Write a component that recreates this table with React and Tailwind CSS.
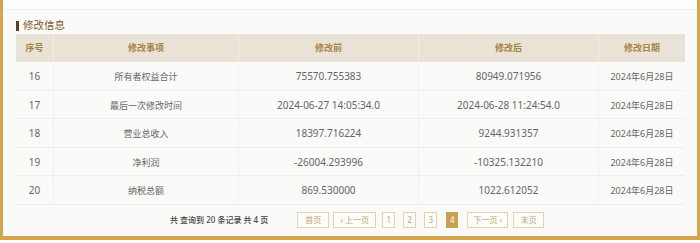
import React from "react";

const rows = [
  { id: 16, item: "所有者权益合计", before: "75570.755383", after: "80949.071956", date: "2024年6月28日" },
  { id: 17, item: "最后一次修改时间", before: "2024-06-27 14:05:34.0", after: "2024-06-28 11:24:54.0", date: "2024年6月28日" },
  { id: 18, item: "营业总收入", before: "18397.716224", after: "9244.931357", date: "2024年6月28日" },
  { id: 19, item: "净利润", before: "-26004.293996", after: "-10325.132210", date: "2024年6月28日" },
  { id: 20, item: "纳税总额", before: "869.530000", after: "1022.612052", date: "2024年6月28日" },
];

const cols = "grid grid-cols-[37px_185px_180px_180px_87px]";

const PageBtn = ({ children, active, className = "" }) => (
  <div
    className={
      "h-[16px] flex items-center justify-center text-[8px] leading-none border " +
      (active ? "bg-[#c9a055] border-[#c9a055] text-white" : "border-[#e3d3ae] text-[#bfa678] bg-[#fdfcf9]") +
      " " +
      className
    }
  >
    {children}
  </div>
);

const App = () => {
  return (
    <div
      className="w-[700px] h-[243px] bg-white overflow-hidden"
      style={{ fontFamily: '"Noto Sans", "Noto Sans CJK SC", sans-serif' }}
    >
      <div className="h-[240px] bg-[#fafaf9] border-l-[3px] border-r-[3px] border-b-4 border-[#d6a54b]">
        <div className="h-[10px] bg-[#fdfdfd] border-b border-[#efefef]" />

        <div className="flex items-center pl-[13px] pt-[7px] h-[24px]">
          <div className="w-[3px] h-[10px] bg-[#5e3b16] mr-[4px]" />
          <span className="text-[10.5px] leading-none text-[#7d5a2c]">修改信息</span>
        </div>

        <div className="ml-[13px] w-[669px]">
          <div className={cols + " h-[28px] bg-[#e9e3d7] text-[9px] font-bold text-[#a8823f]"}>
            <div className="flex items-center justify-center">序号</div>
            <div className="flex items-center justify-center border-l border-[#f1ece3]">修改事项</div>
            <div className="flex items-center justify-center border-l border-[#f1ece3]">修改前</div>
            <div className="flex items-center justify-center border-l border-[#f1ece3]">修改后</div>
            <div className="flex items-center justify-center border-l border-[#f1ece3]">修改日期</div>
          </div>
          {rows.map((r) => (
            <div key={r.id} className={cols + " h-[28.5px] pt-[2px] text-[10px] text-[#666] border-b border-[#eeeeec]"}>
              <div className="flex items-center justify-center">{r.id}</div>
              <div className="flex items-center justify-center text-[9px] border-l border-[#f0f0ee]">{r.item}</div>
              <div className="flex items-center justify-center border-l border-[#f0f0ee]">{r.before}</div>
              <div className="flex items-center justify-center border-l border-[#f0f0ee]">{r.after}</div>
              <div className="flex items-center justify-center text-[9px] border-l border-[#f0f0ee]">{r.date}</div>
            </div>
          ))}
        </div>

        <div className="flex items-center mt-[7px] pl-[167px]">
          <span className="text-[8px] text-[#444] font-medium mr-[29px]">共 查询到 20 条记录 共 4 页</span>
          <div className="flex items-center">
            <PageBtn className="w-[32px]">首页</PageBtn>
            <PageBtn className="w-[43px] ml-[4px]">‹ 上一页</PageBtn>
            <PageBtn className="w-[13px] ml-[6px]">1</PageBtn>
            <PageBtn className="w-[13px] ml-[8px]">2</PageBtn>
            <PageBtn className="w-[13px] ml-[8px]">3</PageBtn>
            <PageBtn active className="w-[12px] ml-[9px]">4</PageBtn>
            <PageBtn className="w-[41px] ml-[9px]">下一页 ›</PageBtn>
            <PageBtn className="w-[31px] ml-[5px]">末页</PageBtn>
          </div>
        </div>
      </div>
    </div>
  );
};

export default App;
